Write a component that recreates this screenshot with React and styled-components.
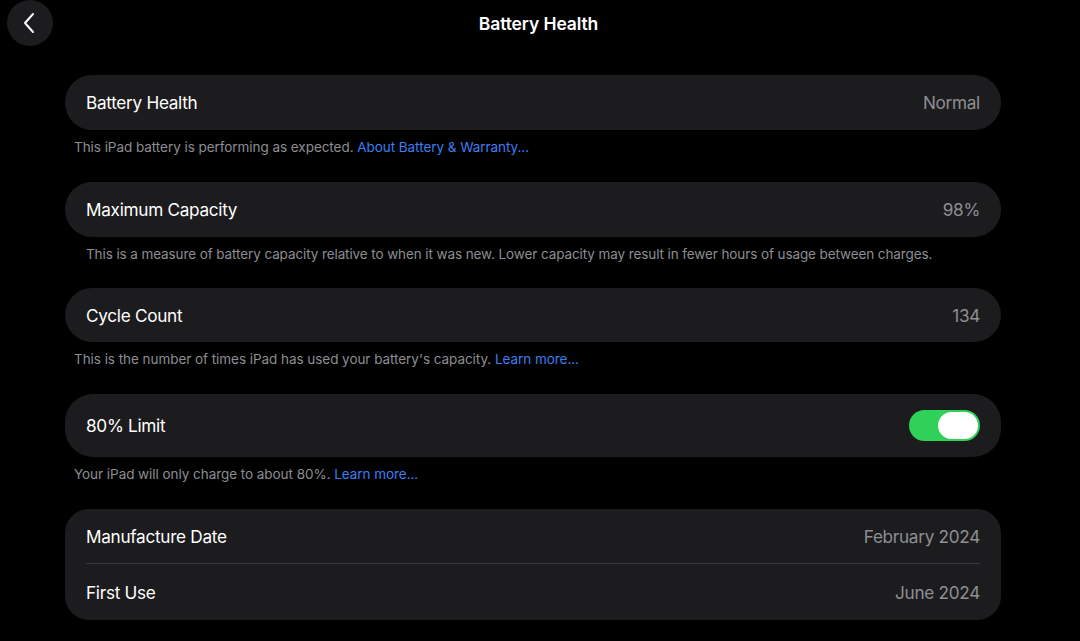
import React from "react";
import styled, { createGlobalStyle } from "styled-components";

const Global = createGlobalStyle`
  html, body { margin: 0; padding: 0; background: #000; }
  body { font-family: Inter, "Noto Sans", sans-serif; color: #fff; -webkit-font-smoothing: antialiased; }
  #root { width: 1080px; height: 641px; overflow: hidden; }
`;

const Page = styled.div`
  width: 1080px;
  height: 641px;
  background: #000;
  display: flex;
  flex-direction: column;
`;

const Header = styled.header`
  height: 46px;
  display: grid;
  grid-template-columns: 60px 1fr 60px;
  align-items: center;
  padding-left: 7px;
  margin-bottom: 29px;
`;

const BackButton = styled.button`
  width: 46px;
  height: 46px;
  border-radius: 50%;
  border: none;
  background: #1c1c1e;
  display: flex;
  align-items: center;
  justify-content: center;
  padding: 0;
`;

const Title = styled.h1`
  margin: 0;
  text-align: center;
  font-size: 17.5px;
  font-weight: 600;
  color: #fff;
  letter-spacing: -0.1px;
  transform: translateX(-5px);
`;

const Content = styled.main`
  display: flex;
  flex-direction: column;
  padding: 0 79px 0 65px;
`;

const Card = styled.section`
  background: #1c1c1e;
  border-radius: ${(p) => p.$radius || 27}px;
  padding: 0 21px;
  display: flex;
  flex-direction: column;
`;

const Row = styled.div`
  height: ${(p) => p.$h || 55}px;
  display: flex;
  align-items: center;
  justify-content: space-between;
  border-top: ${(p) => (p.$divider ? "1px solid #38383a" : "none")};
`;

const Label = styled.span`
  font-size: 17.2px;
  color: #fff;
  letter-spacing: -0.3px;
`;

const Value = styled.span`
  font-size: 17.2px;
  color: #8e8e93;
  letter-spacing: -0.3px;
`;

const Caption = styled.p`
  margin: 0;
  padding: ${(p) => (p.$indent ? "0 0 0 21px" : "0 0 0 9px")};
  height: ${(p) => p.$h || 52}px;
  padding-top: 8px;
  box-sizing: border-box;
  font-size: 13.5px;
  color: #8d8d93;
  letter-spacing: ${(p) => (p.$narrow ? "-0.1px" : "-0.05px")};
  line-height: 18px;
`;

const Link = styled.a`
  color: #3d7ef0;
  text-decoration: none;
`;

const Toggle = styled.div`
  width: 71px;
  height: 31px;
  border-radius: 16px;
  background: #30d158;
  display: flex;
  align-items: center;
  justify-content: flex-end;
  padding: 0 2px;
  box-sizing: border-box;
`;

const Knob = styled.div`
  width: 40px;
  height: 27px;
  border-radius: 14px;
  background: #fff;
`;

export default function App() {
  return (
    <Page>
      <Global />
      <Header>
        <BackButton aria-label="Back">
          <svg width="16" height="22" viewBox="0 0 16 22" fill="none">
            <path d="M11 2 L3 11 L11 20" stroke="#fff" strokeWidth="2" strokeLinecap="round" strokeLinejoin="round" />
          </svg>
        </BackButton>
        <Title>Battery Health</Title>
        <span />
      </Header>
      <Content>
        <Card>
          <Row>
            <Label>Battery Health</Label>
            <Value>Normal</Value>
          </Row>
        </Card>
        <Caption>
          This iPad battery is performing as expected. <Link>About Battery &amp; Warranty...</Link>
        </Caption>
        <Card>
          <Row>
            <Label>Maximum Capacity</Label>
            <Value>98%</Value>
          </Row>
        </Card>
        <Caption $indent $narrow $h={51}>
          This is a measure of battery capacity relative to when it was new. Lower capacity may result in fewer hours of usage between charges.
        </Caption>
        <Card>
          <Row $h={54}>
            <Label>Cycle Count</Label>
            <Value>134</Value>
          </Row>
        </Card>
        <Caption>
          This is the number of times iPad has used your battery's capacity. <Link>Learn more...</Link>
        </Caption>
        <Card $radius={28}>
          <Row $h={63}>
            <Label>80% Limit</Label>
            <Toggle>
              <Knob />
            </Toggle>
          </Row>
        </Card>
        <Caption>
          Your iPad will only charge to about 80%. <Link>Learn more...</Link>
        </Caption>
        <Card $radius={24}>
          <Row $h={54}>
            <Label>Manufacture Date</Label>
            <Value>February 2024</Value>
          </Row>
          <Row $h={56} $divider>
            <Label>First Use</Label>
            <Value>June 2024</Value>
          </Row>
        </Card>
      </Content>
    </Page>
  );
}
